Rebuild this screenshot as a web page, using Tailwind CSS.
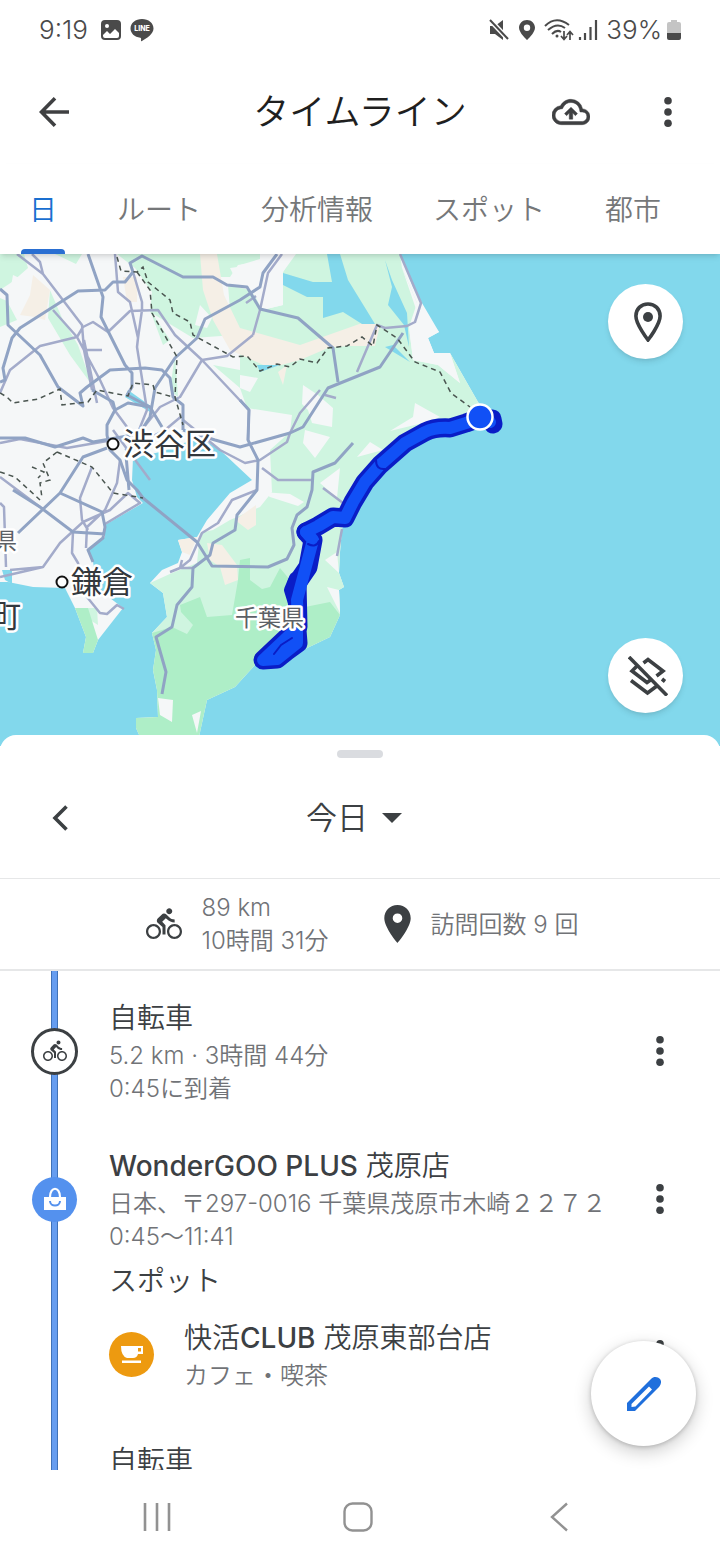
<!DOCTYPE html>
<html lang="ja">
<head>
    <meta charset="UTF-8">
    <meta name="viewport" content="width=device-width, initial-scale=1.0">
    <title>タイムライン</title>
    <script src="https://cdn.jsdelivr.net/npm/@tailwindcss/browser@4"></script>
</head>
<body class="bg-white font-['Inter','Noto_Sans_CJK_JP',sans-serif] text-[#3c4043]">
<div class="flex flex-col h-screen overflow-hidden bg-white">

    <!-- status bar -->
    <div class="flex items-center justify-between h-[60px] shrink-0 pl-[39px] pr-[38px] text-[#4a4a4a]">
        <div class="flex items-center gap-2">
            <span class="text-[26px] leading-8 mr-1 font-[350]">9:19</span>
            <svg class="w-[22px] h-[22px]" viewBox="0 0 22 22"><rect x="1" y="1" width="20" height="20" rx="4" fill="#4a4a4a"/><circle cx="7" cy="7" r="2" fill="#fff"/><path d="M3 16l4-4 3 3 5-5 4 4v3q0 2-2 2H5q-2 0-2-2z" fill="#fff"/></svg>
            <svg class="w-6 h-6" viewBox="0 0 24 24"><path d="M12 1C5.500 1 .5 5 .5 10.500c0 4.800 4 8.500 9.800 9.200.9.200.9.800.7 2.800 0 .8.400.9 1 .5 5-3 11.500-7 11.500-12.500C23.500 5 18.500 1 12 1z" fill="#4a4a4a"/><text x="12" y="13" text-anchor="middle" font-size="7" font-weight="800" fill="#fff">LINE</text></svg>
        </div>
        <div class="flex items-center gap-2">
            <svg class="w-[22px] h-[22px]" viewBox="0 0 22 22"><path d="M2 7h5l8-6v20l-8-6H2z" fill="#4a4a4a"/><path d="M1 0l20 21" stroke="#fff" stroke-width="5"/><path d="M2 1l18 19" stroke="#4a4a4a" stroke-width="2"/></svg>
            <svg class="w-[18px] h-5" viewBox="0 0 18 20"><path fill-rule="evenodd" d="M9 0C4.500 0 1 3.400 1 7.800 1 13 9 20 9 20s8-7 8-12.200C17 3.400 13.500 0 9 0zm0 11a3.200 3.200 0 1 1 0-6.400A3.200 3.200 0 0 1 9 11z" fill="#4a4a4a"/></svg>
            <svg class="w-[30px] h-[22px]" viewBox="0 0 30 22" fill="none" stroke="#4a4a4a" stroke-width="2"><path d="M1 7Q12-4 25 6M4 11q9-8 17-2M8 15q5-5 9-2"/><circle cx="13" cy="17" r="1.500" fill="#4a4a4a" stroke="none"/><path d="M20 12v8m-3-3l3 3.500 3-3.500M26 21v-8m-3 3l3-3.500 3 3.500" stroke-width="1.700"/></svg>
            <svg class="w-5 h-5 -ml-1" viewBox="0 0 20 20" stroke="#4a4a4a" stroke-width="2.200"><path d="M2 20v-3M7 20v-7M12.500 20V7M18 20V0"/></svg>
            <span class="text-[26px] leading-8 -mr-1 font-[350]">39%</span>
            <svg class="w-4 h-5" viewBox="0 0 16 20"><path d="M5 0h6v2h2q2 0 2 2v9H1V4q0-2 2-2h2z" fill="#c4c4c4"/><path d="M1 13h14v5q0 2-2 2H3q-2 0-2-2z" fill="#4a4a4a"/></svg>
        </div>
    </div>

    <!-- app bar -->
    <header class="flex items-center h-[104px] shrink-0">
        <div class="flex-1">
            <button class="flex items-center justify-center w-[108px] h-20" aria-label="戻る">
                <svg class="w-[30px] h-[30px]" viewBox="0 0 30 30" fill="none" stroke="#3f4042" stroke-width="3.600"><path d="M30 15H3M16 1.300L2.500 15 16 28.700"/></svg>
            </button>
        </div>
        <h1 class="text-4xl text-[#1f1f1f] font-[350]">タイムライン</h1>
        <div class="flex flex-1 justify-end">
            <button class="flex items-center justify-center w-[90px] h-20" aria-label="バックアップ">
                <svg class="w-[38px] h-[38px]" viewBox="0 0 24 24" fill="#3f4042" stroke="#3f4042" stroke-width=".3"><path d="M19.350 10.040A7.490 7.490 0 0 0 12 4C9.110 4 6.600 5.640 5.350 8.040A5.994 5.994 0 0 0 0 14c0 3.310 2.690 6 6 6h13c2.760 0 5-2.240 5-5 0-2.640-2.050-4.780-4.650-4.960zM19 18H6c-2.210 0-4-1.790-4-4 0-2.050 1.530-3.760 3.560-3.970l1.070-.11.5-.95A5.469 5.469 0 0 1 12 6c2.620 0 4.880 1.860 5.390 4.430l.3 1.500 1.530.11A2.980 2.980 0 0 1 22 15c0 1.650-1.350 3-3 3z"/><path d="M7.900 13l1.300 1.300 1.700-1.600V16.500h2.200v-3.800l1.700 1.600 1.300-1.300L12 9z"/></svg>
            </button>
            <button class="flex items-center justify-center w-[104px] h-20" aria-label="その他">
                <svg class="w-2 h-[30px]" viewBox="0 0 8 30" fill="#3f4042"><circle cx="4" cy="3.800" r="3.800"/><circle cx="4" cy="15" r="3.800"/><circle cx="4" cy="26.200" r="3.800"/></svg>
            </button>
        </div>
    </header>

    <!-- tabs -->
    <nav class="relative z-10 flex gap-[60px] h-[90px] shrink-0 pl-[29px] bg-white shadow-md text-[28px] text-[#757779] font-[350] whitespace-nowrap">
        <a href="#" class="relative flex items-center pt-px text-[#1a6fd0]">日<span class="absolute -inset-x-2 bottom-0 h-[5px] rounded-t bg-[#2a6fd2]"></span></a>
        <a href="#" class="flex items-center pt-px">ルート</a>
        <a href="#" class="flex items-center pt-px">分析情報</a>
        <a href="#" class="flex items-center pt-px">スポット</a>
        <a href="#" class="flex items-center pt-px">都市</a>
    </nav>

    <!-- map -->
    <div class="relative h-[492px] shrink-0 bg-[#82d8ec]">
        <svg class="block w-full h-full" viewBox="0 254 720 492" preserveAspectRatio="xMidYMid slice">
            <rect y="254" width="720" height="492" fill="#82d8ec"/>
            <!-- land -->
            <path fill="#f5f7f8" d="M0 254H400L413 287 422 303 439 332 428 338 434 353H450L478 402 490 420 450 430 405 447 380 467 353 502 342 529 340 552 339 573 344 587 339 590 340 615 330 637 303 650 280 666 255 665 235 687 207 700 197 746H144L136 728V718L158 717 157 690 153 670 156 650 152 633 167 617 163 593 150 583 162 570 178 563 182 552 178 540 197 537 207 520 230 493 252 480 220 450 200 437 160 452 133 458 132 480 137 497 143 503 105 525 105 537 87 550 93 562 98 590 110 598 123 608 98 640 93 653H83L86 637 75 608 65 588 33 587 8 582H0Z"/>
            <!-- light green -->
            <g fill="#cff5e0">
                <path d="M296 254H400L402 268 417 303 409 327 413 360 438 365 460 383 450 353 478 402 490 420 450 430 405 447 380 467 353 502 342 529 340 552 339 573 344 587 339 590 340 615 290 640 180 640 152 633 167 617 163 593 150 583 172 573 197 563 200 533 213 530 230 520 260 507 272 492 270 450 290 432 292 415 247 408 240 388 213 365 240 370 240 300 262 310 283 305V272Z"/>
                <path d="M117 254H205L218 300 235 335 193 338 150 312 152 292 135 268Z"/>
                <path d="M0 254H24L28 268 12 282 0 290ZM0 298L7 301 17 320 0 327ZM55 254H82L76 264ZM216 254H260V262L238 265 230 277 216 277ZM228 285L250 290 262 305 258 328 240 330 230 310Z"/>
                <path d="M50 290L62 318 78 345 92 385 70 355 48 318ZM150 310L170 340 163 345ZM175 355L178 397 170 390Z"/>
                <path d="M75 608L97 608 98 625 90 620Z"/>
            </g>
            <!-- farmland -->
            <g fill="#f5efe6">
                <path d="M33 275L50 290 45 320 35 317 20 315 30 295ZM200 254H217L224 295 240 328 300 345 365 322 380 325 375 346 347 346 328 348 300 360 270 368 230 350 213 320 203 290ZM123 277L137 277 137 302 127 302ZM278 372L287 365 283 385ZM178 540L197 537 190 555 182 552ZM207 543L222 545 237 565 238 580 225 585 220 567 210 560ZM235 520L256 505V525L248 530Z"/>
            </g>
            <!-- forest -->
            <path fill="#aeeec7" d="M180 605L200 597 207 617 232 615 238 580 240 560 250 558 250 580 262 589 270 587 280 568 290 580 305 607 330 602 340 615 330 637 303 650 280 666 255 665 235 687 207 700 197 746H144L136 728V718L158 717 157 690 153 670 156 650 152 633 172 627 187 634 193 625 181 612ZM75 608H88L98 640 93 653H83L86 637Z"/>
            <!-- built-up patches -->
            <g fill="#f5f7f8">
                <path d="M240 265L277 254H293L283 272V305L262 310ZM402 268L417 303 439 332 428 338 434 353H450L460 383 438 365 413 360 409 327 418 315ZM303 385L318 395 333 408 332 427 312 423 308 410 302 404ZM305 430L330 437 315 458 303 443ZM415 403L440 417 427 422 390 431 413 417ZM370 442L383 450 357 457ZM340 468L337 498 320 483ZM325 560L337 552 339 573ZM327 587L339 590 340 613ZM158 698L173 700 172 722 160 715ZM192 715L201 711 197 733ZM240 375L258 378 250 392 240 388ZM200 305L212 318 207 328 195 325ZM230 268L260 264V285L240 288ZM13 275L30 283 22 305 10 292ZM55 285L75 300 70 310 50 290ZM262 492L290 494 304 502 298 506 270 497Z"/>
            </g>
            <!-- lakes and rivers -->
            <g fill="#82d8ec">
                <path d="M283 273L313 282 332 282 327 254H340L348 280 375 324H362L343 312 323 318V297H307L283 285ZM385 260L392 280 407 313 409 347 404 325 388 305 392 287ZM385 347L393 345 410 362ZM257 365H280L260 372ZM128 390L152 407 150 412 125 397ZM2 570H12V584L5 580Z"/>
            </g>
            <!-- secondary roads -->
            <g fill="none" stroke="#a3abca" stroke-width="2.500" stroke-linejoin="round">
                <path d="M17 254L43 274 82 325 84 350 92 390M32 254L40 262 43 274M115 254L118 292 130 302 138 338 137 347 147 410 137 435M133 272L142 302V310L138 338M0 393L10 370 40 346 77 337 83 327 93 322 108 332 130 311 158 310 175 335 202 360 249 410 248 440M253 335L227 356 202 360 180 397 160 407 140 432M77 337L100 380 113 408 127 427M53 310L77 337M84 350H102M84 340L97 403"/>
                <path d="M0 443L20 439 67 448 107 441M0 503L4 507 6 567M0 577L43 567 60 543 83 522 110 510 128 493 140 503 105 524M10 570L43 567M92 467L80 498 82 520 88 530M120 460L117 483 105 510 87 527 86 548M73 532L72 553 78 563 87 597 100 613 107 614 117 605 124 609M257 490L232 500 218 523 202 533 190 560 180 568 170 572M180 568L182 560M180 568H193M0 477L40 507"/>
                <path d="M282 254L268 273 260 310 253 335M357 372L377 325 385 328 407 326 415 322 421 303 400 254M325 395L336 398M320 390L300 413 290 433 287 442 260 460 245 463 220 450 183 420M262 468L278 480H312M323 488L343 503M342 529L337 556M256 296L246 303M113 430L150 480M183 415L165 430 125 450"/>
            </g>
            <!-- highways -->
            <g fill="none" stroke="#90a3c4" stroke-width="3" stroke-linejoin="round">
                <path d="M88 254L103 297 101 317 125 365 132 373V387L127 395 150 407 162 427M0 289L7 295 8 325 40 355 58 387 83 406 80 393 87 387 110 370 145 368 162 370 170 378 173 397 183 405V430M0 382L5 380 3 368 12 338 20 328 78 291 105 290 113 282H125L133 272 130 263 142 256 183 277H213L227 285 247 287 260 309 298 318 333 348 338 382"/>
                <path d="M277 254L263 273 260 287 240 300 205 319 197 338 175 358 155 388 150 417 137 437M92 390L113 402 115 410 107 425V435L110 450 120 460 127 480 137 490 143 498 197 542 212 566 268 567 287 559 294 545 292 528 297 515 307 507 312 490 313 472 335 463 353 443M115 410L128 403 150 407"/>
                <path d="M0 438H25L55 447 83 438 93 442 133 435M183 430L215 440 240 447 290 433 303 427 328 388 380 367 403 333M107 448L83 457 60 493 18 533M13 490L40 507 73 532 105 534M60 493L102 512 105 527 103 538 88 550 93 562M240 400L249 410 248 440 258 460 257 490 237 515 235 530 213 543 210 555 193 568 192 587 177 605 172 627 156 637 166 672 162 694M126 455L129 490"/>
            </g>
            <!-- prefecture borders -->
            <g fill="none" stroke="#4a5550" stroke-width="1.500" stroke-dasharray="5 4">
                <path d="M117 257L121 271 137 272 143 267 148 282 170 300 173 313 190 322 193 335 233 357 247 356 260 371 277 364 290 367 300 359 317 363 328 348 347 346 362 337 373 346 377 325 397 338 415 362 440 372 451 393 470 407"/>
                <path d="M137 272L150 290 152 313 177 357 175 397 183 425M0 393L7 397 13 403 38 399 60 389 62 405 88 402 97 390 128 396 133 383 153 385 155 392 173 397M0 472L15 477 40 500M57 452L92 467 113 493 143 498M57 452L43 463 50 480 40 483 42 498M32 467L44 472 38 478"/>
            </g>
            <!-- recorded route -->
            <g fill="none" stroke-linecap="round" stroke-linejoin="round">
                <g stroke="#0a1dc6" stroke-width="19">
                    <path d="M493 424L492 419 480 418 466 423 450 428 Q435 427 425 432L405 443 380 465 365 482 353 502 345 518 333 517 318 526 306 532"/>
                    <path d="M306 532L313 540 308 567 297 583 298 627 263 660 277 659 287 651 298 643 297 630"/>
                </g>
                <path stroke="#0a1dc6" stroke-width="12" d="M295 578L290 590 294 603"/>
                <g stroke="#1150f6" stroke-width="12">
                    <path d="M490 422L480 418 466 423 450 428 Q435 427 425 432L405 443 380 465 365 482 353 502 345 518 333 517 318 526 306 532"/>
                    <path d="M306 532L313 540 297 600 298 627 263 660 277 659 287 651 297 643 297 630"/>
                </g>
                <path stroke="#0a1dc6" stroke-width="2" d="M274 654L281 645 292 638M308 544Q316 548 319 541M376 460Q376 470 385 469"/>
            </g>
            <circle cx="480" cy="417" r="12.500" fill="#1150f6" stroke="#fff" stroke-width="2.500"/>
            <!-- place names -->
            <g fill="#fff" stroke="#111" stroke-width="2"><circle cx="113" cy="444" r="5.500"/><circle cx="62" cy="582" r="5.500"/></g>
            <g class="font-['Noto_Sans_CJK_JP',sans-serif]" stroke="#fff" stroke-width="5" stroke-linejoin="round" paint-order="stroke">
                <g fill="#33383d" font-size="31"><text x="123" y="455">渋谷区</text><text x="71" y="593">鎌倉</text><text x="-10" y="627">町</text></g>
                <g fill="#5c6066" font-size="23"><text x="235" y="626">千葉県</text><text x="-6" y="549">県</text></g>
            </g>
        </svg>
        <button class="absolute top-[30px] right-[37px] flex items-center justify-center w-[75px] h-[75px] pl-1 rounded-full bg-white shadow-md" aria-label="現在地">
            <svg class="w-7 h-10" viewBox="0 0 28 40"><path d="M14 2C7 2 1.900 7 1.900 14 1.900 22.500 14 38 14 38S26.100 22.500 26.100 14C26.100 7 21 2 14 2z" fill="none" stroke="#3c4043" stroke-width="3.600"/><circle cx="14" cy="15" r="5" fill="#3c4043"/></svg>
        </button>
        <button class="absolute top-[384px] right-[37px] flex items-center justify-center w-[75px] h-[75px] pl-1 rounded-full bg-white shadow-md" aria-label="レイヤを非表示">
            <svg class="w-10 h-10" viewBox="0 0 40 40" fill="none" stroke="#3c4043" stroke-width="3.600"><path d="M15.500 7L20 3.500 35 15 28.500 20M9 10L4 15 19 26.500 24 23M3 24.500L19.500 37 28.500 30.300M34 23l3 2.500"/><path d="M4 0L42 39" stroke="#fff" stroke-width="3"/><path d="M1 1L39 39.500"/></svg>
        </button>
    </div>

    <!-- bottom sheet -->
    <main class="relative z-10 flex flex-col flex-1 min-h-0 -mt-[11px] rounded-t-2xl bg-white">
        <div class="flex flex-col h-[144px] shrink-0 border-b border-[#e6e7e8]">
            <span class="w-[46px] h-2 mt-[15px] rounded-full bg-[#dadce0] self-center"></span>
            <div class="flex items-center h-[120px]">
                <button class="flex items-center justify-center w-[120px] h-20" aria-label="前の日">
                    <svg class="w-4 h-[26px]" viewBox="0 0 16 26" fill="none" stroke="#3c4043" stroke-width="3.600"><path d="M14.500 1.500L3 13 14.500 24.500"/></svg>
                </button>
                <button class="flex flex-1 items-center justify-center gap-[14px] pr-3 text-[31px] leading-10 font-[350]">今日
                    <svg class="w-5 h-[10px]" viewBox="0 0 20 10"><path d="M0 0h20L10 10z" fill="#3c4043"/></svg>
                </button>
                <span class="w-[120px]"></span>
            </div>
        </div>

        <section class="flex items-center justify-center h-[92px] shrink-0 pl-1 border-b-2 border-[#e6e7e8] text-2xl leading-[33px] font-[350] text-[#717377]">
            <svg class="w-9 h-9" viewBox="0 0 24 24" fill="#3c4043"><use href="#bike"/></svg>
            <p class="ml-5">89 km<br>10時間 31分</p>
            <svg class="w-[27px] h-[38px] ml-[55px]" viewBox="0 0 27 38"><path fill-rule="evenodd" fill="#3c4043" d="M13.500 0C6 0 .3 5.800.3 13.200.3 22.500 13.500 38 13.500 38S26.700 22.500 26.700 13.200C26.700 5.800 21 0 13.500 0zm0 18a4.800 4.800 0 1 1 0-9.600 4.800 4.800 0 0 1 0 9.600z"/></svg>
            <p class="ml-5">訪問回数 9 回</p>
        </section>

        <div class="flex-1 min-h-0 overflow-y-auto [scrollbar-width:none]">
            <ul class="relative h-full overflow-hidden pt-[26px]">
                <li class="absolute top-0 bottom-0 left-[51px] w-[7px] border-x border-[#3f72b8] bg-[#669df0]" aria-hidden="true"></li>
                <li class="relative flex items-center">
                    <div class="flex justify-center w-[109px] shrink-0">
                        <span class="flex items-center justify-center w-[47px] h-[47px] rounded-full border-3 border-[#3c4043] bg-white">
                            <svg class="w-6 h-6" viewBox="0 0 24 24" fill="#3c4043"><path id="bike" d="M15.500 5.500c1.100 0 2-.9 2-2s-.9-2-2-2-2 .9-2 2 .9 2 2 2zM5 12c-2.800 0-5 2.200-5 5s2.200 5 5 5 5-2.200 5-5-2.200-5-5-5zm0 8.500c-1.900 0-3.500-1.600-3.500-3.500s1.600-3.500 3.500-3.500 3.500 1.600 3.500 3.500-1.600 3.500-3.500 3.500zm5.800-10l2.400-2.400.8.8c1.300 1.300 3 2.100 5.100 2.100V9c-1.500 0-2.700-.6-3.600-1.500l-1.900-1.900c-.5-.4-1-.6-1.600-.6s-1.100.2-1.400.6L7.800 8.400c-.4.4-.6.9-.6 1.400 0 .6.200 1.100.6 1.400L11 14v5h2v-6.200l-2.200-2.300zM19 12c-2.800 0-5 2.200-5 5s2.200 5 5 5 5-2.200 5-5-2.200-5-5-5zm0 8.500c-1.900 0-3.500-1.600-3.500-3.500s1.600-3.500 3.500-3.500 3.500 1.600 3.500 3.500-1.600 3.500-3.500 3.500z"/></svg>
                        </span>
                    </div>
                    <div class="flex-1">
                        <h2 class="text-[28px] leading-[42px] font-[350]">自転車</h2>
                        <p class="text-2xl leading-[33px] font-[350] text-[#717377]">5.2 km · 3時間 44分<br>0:45に到着</p>
                    </div>
                    <button class="flex items-center justify-center w-[120px] h-20" aria-label="メニュー">
                        <svg class="w-2 h-[30px]" viewBox="0 0 8 30" fill="#3c4043"><circle cx="4" cy="3.800" r="3.800"/><circle cx="4" cy="15" r="3.800"/><circle cx="4" cy="26.200" r="3.800"/></svg>
                    </button>
                </li>
                <li class="relative flex items-center mt-10">
                    <div class="flex justify-center w-[109px] shrink-0">
                        <span class="flex items-center justify-center w-[45px] h-[45px] rounded-full bg-[#5491ee]">
                            <svg class="w-[22px] h-6" viewBox="0 0 22 24"><path d="M0 10h22v13H0z" fill="#fff"/><path d="M6 10c0-11 10-11 10 0" fill="none" stroke="#fff" stroke-width="2.200"/><path d="M6 14c0 6 10 6 10 0" fill="none" stroke="#5491ee" stroke-width="2"/></svg>
                        </span>
                    </div>
                    <div class="flex-1 whitespace-nowrap">
                        <h2 class="text-[28px] leading-[42px] font-[350]"><span class="font-medium">WonderGOO PLUS</span> 茂原店</h2>
                        <p class="text-2xl leading-[33px] font-[350] text-[#717377]">日本、〒297-0016 千葉県茂原市木崎２２７２<br>0:45〜11:41</p>
                    </div>
                    <button class="absolute right-0 flex items-center justify-center w-[120px] h-20" aria-label="メニュー">
                        <svg class="w-2 h-[30px]" viewBox="0 0 8 30" fill="#3c4043"><circle cx="4" cy="3.800" r="3.800"/><circle cx="4" cy="15" r="3.800"/><circle cx="4" cy="26.200" r="3.800"/></svg>
                    </button>
                </li>
                <li class="relative pl-[109px] mt-[7px]">
                    <h3 class="text-[28px] leading-[42px] font-[350]">スポット</h3>
                    <div class="flex items-center mt-[15px]">
                        <span class="flex items-center justify-center w-[45px] h-[45px] shrink-0 rounded-full bg-[#ed9a10]">
                            <svg class="w-[22px] h-[18px]" viewBox="0 0 22 18"><path fill="#fff" fill-rule="evenodd" d="M0 0h22v8h-5q-1 4-5 4H6Q0 10 0 0zm17 2v3.500h3V2zM1 14.500h19V17H1z"/></svg>
                        </span>
                        <div class="flex-1 ml-[30px]">
                            <h2 class="text-[28px] leading-[42px] font-[350]">快活<span class="font-medium">CLUB</span> 茂原東部台店</h2>
                            <p class="text-2xl leading-[33px] font-[350] text-[#717377]">カフェ・喫茶</p>
                        </div>
                        <button class="flex items-center justify-center w-[120px] h-[74px]" aria-label="メニュー">
                            <svg class="w-2 h-[30px]" viewBox="0 0 8 30" fill="#3c4043"><circle cx="4" cy="3.800" r="3.800"/><circle cx="4" cy="15" r="3.800"/><circle cx="4" cy="26.200" r="3.800"/></svg>
                        </button>
                    </div>
                </li>
                <li class="relative pl-[109px] mt-12">
                    <h2 class="text-[28px] leading-[42px] font-[350]">自転車</h2>
                </li>
            </ul>
        </div>

        <button class="absolute right-6 bottom-6 flex items-center justify-center w-[105px] h-[105px] rounded-full bg-white shadow-[0_6px_18px_rgba(0,0,0,0.2),0_1px_4px_rgba(0,0,0,0.2)]" aria-label="編集">
            <svg class="w-[34px] h-[34px]" viewBox="0 0 34 34"><path d="M0 34v-8L24 2c3-3 7-2 9 0 1.500 2 1.500 5-1 8L8 34z" fill="#1f6fdc"/><path d="M22 9.500l3 3L8.500 29.500 4.500 30v-3z" fill="#fff"/></svg>
        </button>
    </main>

    <!-- system navigation -->
    <footer class="flex items-center h-[90px] shrink-0 pl-[56px] pr-[60px] pt-1 bg-white">
        <button class="flex flex-1 justify-center" aria-label="最近"><svg class="w-7 h-7" viewBox="0 0 28 28" stroke="#929292" stroke-width="2.600"><path d="M2 0v28M14 0v28M26 0v28"/></svg></button>
        <button class="flex flex-1 justify-center" aria-label="ホーム"><svg class="w-[30px] h-[30px]" viewBox="0 0 30 30" fill="none" stroke="#929292" stroke-width="2.400"><rect x="1.500" y="1.500" width="27" height="27" rx="8"/></svg></button>
        <button class="flex flex-1 justify-center" aria-label="戻る"><svg class="w-[18px] h-[30px]" viewBox="0 0 18 30" fill="none" stroke="#929292" stroke-width="2.400"><path d="M17 1.500L2 15l15 13.500"/></svg></button>
    </footer>
</div>
</body>
</html>
